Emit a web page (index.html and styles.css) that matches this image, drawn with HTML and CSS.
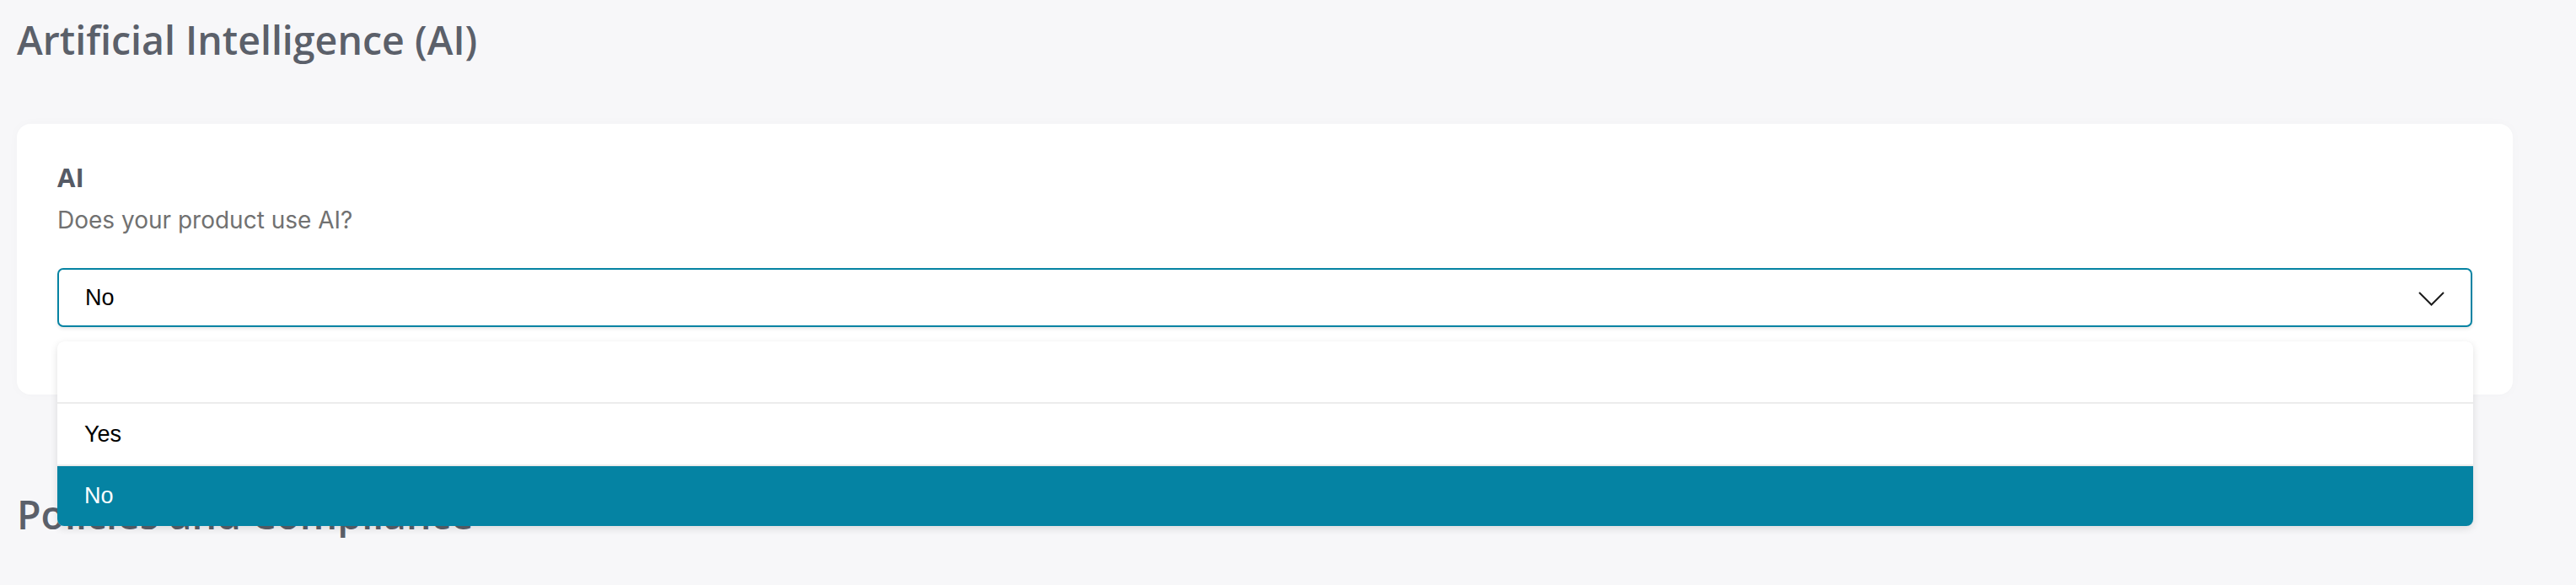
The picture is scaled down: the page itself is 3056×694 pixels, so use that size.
FILE: index.html
```html
<!DOCTYPE html>
<html lang="en">
<head>
<meta charset="utf-8">
<title>Artificial Intelligence (AI)</title>
<link rel="stylesheet" href="styles.css">
</head>
<body>
<main class="page">
  <h1 class="section-title">Artificial Intelligence (AI)</h1>
  <section class="card">
    <h2 class="field-label">AI</h2>
    <p class="field-help">Does your product use AI?</p>
    <div class="select-wrap">
      <div class="select">
        <span class="select-value">No</span>
        <svg class="chevron" width="31" height="17" viewBox="0 0 31 17" aria-hidden="true">
          <polyline points="1,1 15.5,15.5 30,1" fill="none" stroke="#1c1c1c" stroke-width="2"/>
        </svg>
      </div>
      <ul class="dropdown">
        <li class="option option-empty"></li>
        <li class="option">Yes</li>
        <li class="option option-selected">No</li>
      </ul>
    </div>
  </section>
  <h1 class="section-title section-title-next">Policies and Compliance</h1>
</main>
</body>
</html>
```

FILE: styles.css
```css
html, body {
  margin: 0;
  padding: 0;
}

body {
  background: #f7f7f9;
  font-family: "Open Sans", "Liberation Sans", sans-serif;
}

.page {
  padding: 19px 75px 0 20px;
}

.section-title {
  margin: 0;
  font-family: "Open Sans", sans-serif;
  font-weight: 600;
  font-size: 46.5px;
  line-height: 56px;
  color: #5b606a;
}

.section-title-next {
  margin-top: 114px;
}

.card {
  margin-top: 72px;
  background: #ffffff;
  border-radius: 16px;
  padding: 43px 48px 80px 48px;
  box-shadow: 0 0 14px rgba(20, 20, 40, 0.025);
}

.field-label {
  margin: 0;
  font-family: "Open Sans", sans-serif;
  font-weight: 700;
  font-size: 31px;
  line-height: 40px;
  color: #555a65;
}

.field-help {
  margin: 13px 0 0 0;
  font-family: "Inter", sans-serif;
  font-weight: 400;
  font-size: 28px;
  line-height: 36px;
  color: #717171;
}

.select-wrap {
  position: relative;
  margin-top: 39px;
}

.select {
  box-sizing: border-box;
  height: 70px;
  border: 2px solid #0583a3;
  border-radius: 7px;
  background: #ffffff;
  box-shadow: 0 2px 4px rgba(0, 0, 0, 0.1);
  display: flex;
  align-items: center;
  justify-content: space-between;
  padding: 0 31px 0 31px;
}

.select-value {
  font-family: "Liberation Sans", Arial, sans-serif;
  font-size: 27px;
  color: #000000;
}

.chevron {
  display: block;
  margin-top: 2px;
}

.dropdown {
  position: absolute;
  top: calc(100% + 17px);
  left: 0;
  right: -1px;
  z-index: 5;
  margin: 0;
  padding: 0;
  list-style: none;
  display: flex;
  flex-direction: column;
  gap: 2px;
  background: #ececec;
  border-radius: 8px;
  overflow: hidden;
  box-shadow: 0 3px 10px rgba(0, 0, 0, 0.12);
}

.option {
  box-sizing: border-box;
  height: 72px;
  display: flex;
  align-items: center;
  padding: 0 32px;
  background: #ffffff;
  font-family: "Liberation Sans", Arial, sans-serif;
  font-size: 27px;
  color: #000000;
}

.option-selected {
  height: 71px;
  background: #0583a3;
  color: #ffffff;
}
```
